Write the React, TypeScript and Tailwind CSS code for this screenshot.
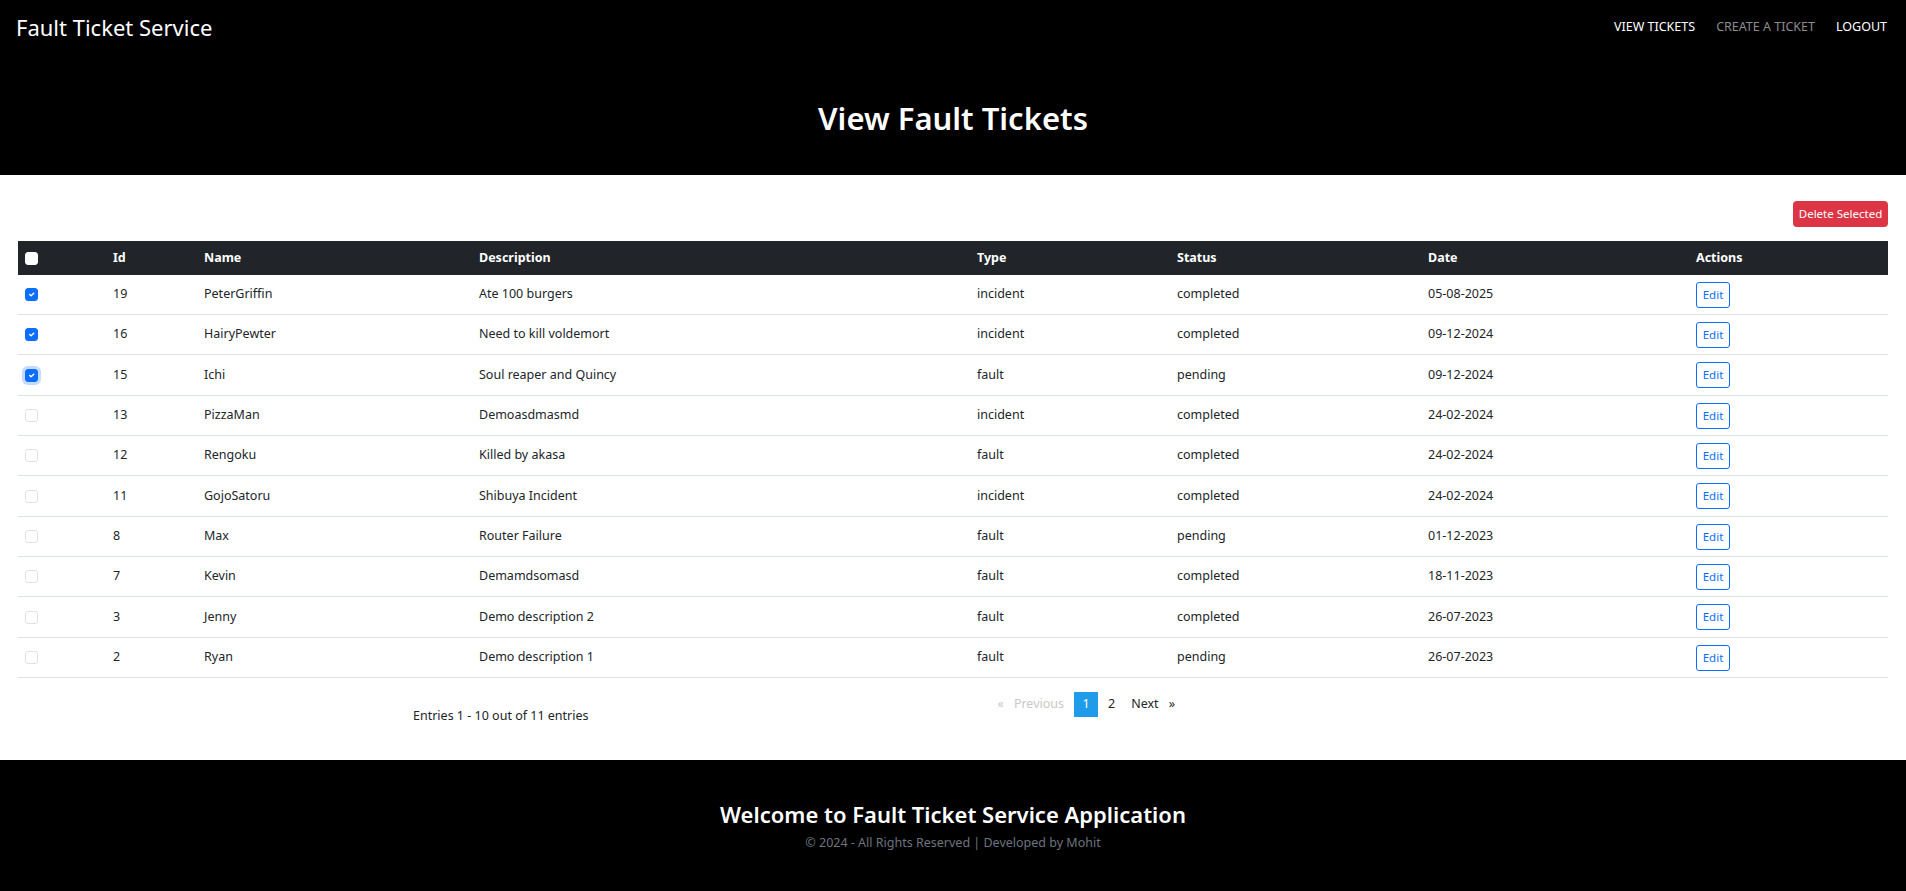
import { useState } from 'react';

interface Ticket {
  id: number;
  name: string;
  description: string;
  type: string;
  status: string;
  date: string;
}

const tickets: Ticket[] = [
  { id: 19, name: 'PeterGriffin', description: 'Ate 100 burgers', type: 'incident', status: 'completed', date: '05-08-2025' },
  { id: 16, name: 'HairyPewter', description: 'Need to kill voldemort', type: 'incident', status: 'completed', date: '09-12-2024' },
  { id: 15, name: 'Ichi', description: 'Soul reaper and Quincy', type: 'fault', status: 'pending', date: '09-12-2024' },
  { id: 13, name: 'PizzaMan', description: 'Demoasdmasmd', type: 'incident', status: 'completed', date: '24-02-2024' },
  { id: 12, name: 'Rengoku', description: 'Killed by akasa', type: 'fault', status: 'completed', date: '24-02-2024' },
  { id: 11, name: 'GojoSatoru', description: 'Shibuya Incident', type: 'incident', status: 'completed', date: '24-02-2024' },
  { id: 8, name: 'Max', description: 'Router Failure', type: 'fault', status: 'pending', date: '01-12-2023' },
  { id: 7, name: 'Kevin', description: 'Demamdsomasd', type: 'fault', status: 'completed', date: '18-11-2023' },
  { id: 3, name: 'Jenny', description: 'Demo description 2', type: 'fault', status: 'completed', date: '26-07-2023' },
  { id: 2, name: 'Ryan', description: 'Demo description 1', type: 'fault', status: 'pending', date: '26-07-2023' },
];

const cols = 'grid grid-cols-[87px_91px_275px_498px_200px_251px_268px_1fr]';

function Checkbox({ checked, focused, header }: { checked?: boolean; focused?: boolean; header?: boolean }) {
  return (
    <span
      className={`flex h-[13px] w-[13px] items-center justify-center rounded-[3px] border ${
        checked
          ? 'border-[#0d6efd] bg-[#0d6efd]'
          : header
          ? 'border-white bg-white'
          : 'border-[#dee2e6] bg-white'
      } ${focused ? 'ring-[3px] ring-[#c2dbfe]' : ''}`}
    >
      {checked && (
        <svg width="9" height="9" viewBox="0 0 20 20" fill="none">
          <path d="M6 10l3 3l6-6" stroke="white" strokeWidth="3" strokeLinecap="round" strokeLinejoin="round" />
        </svg>
      )}
    </span>
  );
}

export default function App() {
  const [selected] = useState<number[]>([19, 16, 15]);

  return (
    <div className="min-h-screen bg-white text-[#212529]" style={{ fontFamily: '"Noto Sans", sans-serif' }}>
      <header className="bg-black text-white">
        <nav className="flex h-[54px] items-center justify-between pl-[16px] pr-[19px]">
          <span className="text-[22px]">Fault Ticket Service</span>
          <div className="flex items-center gap-[21px] text-[12.5px]">
            <a className="text-white">VIEW TICKETS</a>
            <a className="text-[#8c8c8c]">CREATE A TICKET</a>
            <a className="text-white">LOGOUT</a>
          </div>
        </nav>
        <div className="h-[121px] pt-[44px] text-center">
          <h1 className="text-[31px] font-semibold leading-[40px]">View Fault Tickets</h1>
        </div>
      </header>

      <main className="h-[585px] px-[18px] pt-[26px]">
        <div className="flex justify-end">
          <button className="h-[26px] w-[95px] rounded-[4px] bg-[#dc3545] text-[11.5px] text-white">Delete Selected</button>
        </div>

        <div className="mt-[14px] text-[12.5px]">
          <div className={`${cols} h-[34px] items-center bg-[#212529] font-bold text-white`}>
            <div className="pl-[7px]"><Checkbox header /></div>
            <div className="pl-[8px]">Id</div>
            <div className="pl-[8px]">Name</div>
            <div className="pl-[8px]">Description</div>
            <div className="pl-[8px]">Type</div>
            <div className="pl-[8px]">Status</div>
            <div className="pl-[8px]">Date</div>
            <div className="pl-[8px]">Actions</div>
          </div>
          {tickets.map((t, i) => (
            <div
              key={t.id}
              className={`${cols} items-center border-b border-[#dee2e6] ${i % 3 === 2 ? 'h-[41px]' : 'h-[40px]'}`}
            >
              <div className="pl-[7px]">
                <Checkbox checked={selected.includes(t.id)} focused={t.id === 15} />
              </div>
              <div className="pl-[8px]">{t.id}</div>
              <div className="pl-[8px]">{t.name}</div>
              <div className="pl-[8px]">{t.description}</div>
              <div className="pl-[8px]">{t.type}</div>
              <div className="pl-[8px]">{t.status}</div>
              <div className="pl-[8px]">{t.date}</div>
              <div className="pl-[8px]">
                <button className="h-[26px] w-[34px] rounded-[3px] border border-[#0d6efd] text-[11.5px] text-[#0d6efd]">Edit</button>
              </div>
            </div>
          ))}
        </div>

        <div className="flex items-start">
          <div className="ml-[395px] mt-[28px] text-[12.5px] leading-[20px]">Entries 1 - 10 out of 11 entries</div>
          <ul className="ml-[405px] mt-[14px] flex h-[25px] items-center text-[12.5px]">
            <li className="px-[4px] text-[#c8c8c8]">«</li>
            <li className="px-[6px] text-[#c8c8c8]">Previous</li>
            <li className="ml-[4px] flex h-[25px] w-[24px] items-center justify-center bg-[#1e9be9] text-white">1</li>
            <li className="px-[10px]">2</li>
            <li className="px-[6px]">Next</li>
            <li className="px-[4px]">»</li>
          </ul>
        </div>
      </main>

      <footer className="h-[131px] bg-black pt-[38px] text-center">
        <h2 className="text-[22px] font-semibold leading-[32px] text-white">Welcome to Fault Ticket Service Application</h2>
        <p className="mt-[4px] text-[12.5px] leading-[18px] text-[#6c757d]">© 2024 - All Rights Reserved | Developed by Mohit</p>
      </footer>
    </div>
  );
}
